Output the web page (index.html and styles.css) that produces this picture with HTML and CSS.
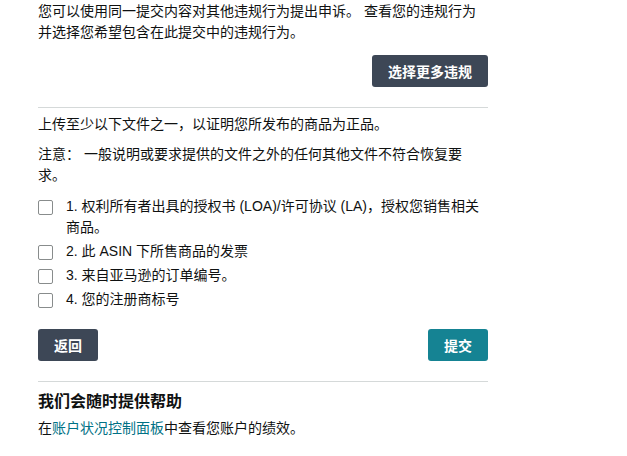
FILE: index.html
```html
<!DOCTYPE html>
<html>
<head lang="zh-CN">
    <meta charset="UTF-8">
    <title>提交申诉</title>
    <link rel="stylesheet" href="styles.css">
</head>
<body>
<div id="container">
    <p class="intro">您可以使用同一提交内容对其他违规行为提出申诉。 查看您的违规行为并选择您希望包含在此提交中的违规行为。</p>
    <div class="more-row">
        <button class="btn btn-dark">选择更多违规</button>
    </div>
    <hr class="divider">
    <p class="lead">上传至少以下文件之一，以证明您所发布的商品为正品。</p>
    <p class="note">注意： 一般说明或要求提供的文件之外的任何其他文件不符合恢复要求。</p>
    <ul class="doc-list">
        <li><span class="box"></span><span class="label">1. 权利所有者出具的授权书 (LOA)/许可协议 (LA)，授权您销售相关商品。</span></li>
        <li><span class="box"></span><span class="label">2. 此 ASIN 下所售商品的发票</span></li>
        <li><span class="box"></span><span class="label">3. 来自亚马逊的订单编号。</span></li>
        <li><span class="box"></span><span class="label">4. 您的注册商标号</span></li>
    </ul>
    <div class="actions">
        <button class="btn btn-dark">返回</button>
        <button class="btn btn-teal">提交</button>
    </div>
    <hr class="divider">
    <h3 class="help-title">我们会随时提供帮助</h3>
    <p class="help-text">在<a href="#">账户状况控制面板</a>中查看您账户的绩效。</p>
</div>
</body>
</html>
```

FILE: styles.css
```css
* {
    margin: 0;
    padding: 0;
    box-sizing: border-box;
}
body {
    background: #fff;
    color: #0f1111;
    font-family: "Liberation Sans", "Noto Sans CJK SC", sans-serif;
    font-size: 14px;
    line-height: 21px;
}
ul {
    list-style: none;
}
#container {
    width: 450px;
    margin-left: 38px;
    padding-top: 1px;
}
.more-row {
    display: flex;
    justify-content: flex-end;
    margin-top: 12px;
}
.btn {
    height: 32px;
    padding: 0 16px;
    border: none;
    border-radius: 3px;
    color: #fff;
    font-family: "Liberation Sans", "Noto Sans CJK SC", sans-serif;
    font-size: 14px;
    font-weight: bold;
}
.btn-dark {
    background: #3d4756;
}
.btn-teal {
    background: #158393;
}
.divider {
    border: none;
    border-top: 1px solid #d5d9d9;
    margin-top: 20px;
}
.lead {
    margin-top: 6px;
}
.note {
    margin-top: 9px;
}
.doc-list {
    margin-top: 10px;
}
.doc-list li {
    display: flex;
    align-items: flex-start;
    margin-bottom: 3px;
}
.box {
    flex: none;
    width: 15px;
    height: 15px;
    margin-top: 4px;
    border: 1px solid #888c8c;
    border-radius: 2px;
}
.label {
    margin-left: 13px;
}
.actions {
    display: flex;
    justify-content: space-between;
    margin-top: 19px;
}
.help-title {
    margin-top: 9px;
    font-size: 16px;
    line-height: 22px;
    font-weight: bold;
}
.help-text {
    margin-top: 5px;
}
.help-text a {
    color: #007185;
    text-decoration: none;
}
```
